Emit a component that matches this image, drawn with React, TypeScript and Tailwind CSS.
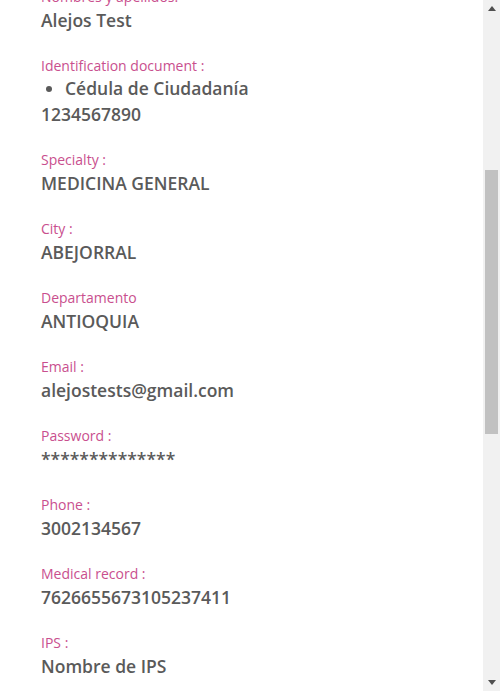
import React from 'react';

const fields: { label: string; value: string; doc?: boolean }[] = [
  { label: 'Nombres y apellidos:', value: 'Alejos Test' },
  { label: 'Identification document :', value: '1234567890', doc: true },
  { label: 'Specialty :', value: 'MEDICINA GENERAL' },
  { label: 'City :', value: 'ABEJORRAL' },
  { label: 'Departamento', value: 'ANTIOQUIA' },
  { label: 'Email :', value: 'alejostests@gmail.com' },
  { label: 'Password :', value: '**************' },
  { label: 'Phone :', value: '3002134567' },
  { label: 'Medical record :', value: '7626655673105237411' },
  { label: 'IPS :', value: 'Nombre de IPS' },
];

function Scrollbar() {
  return (
    <div className="flex h-full w-[17px] flex-col bg-[#f1f1f1]">
      <div className="flex h-[17px] items-center justify-center">
        <svg width="8" height="5" viewBox="0 0 8 5">
          <path d="M0 5 L4 0 L8 5 Z" fill="#505050" />
        </svg>
      </div>
      <div className="h-[153px]" />
      <div className="mx-auto h-[264px] w-[13px] bg-[#c1c1c1]" />
      <div className="flex-1" />
      <div className="flex h-[17px] items-center justify-center">
        <svg width="8" height="5" viewBox="0 0 8 5">
          <path d="M0 0 L8 0 L4 5 Z" fill="#505050" />
        </svg>
      </div>
    </div>
  );
}

export default function App() {
  return (
    <div className="flex h-[691px] w-[500px] overflow-hidden bg-white font-['Open_Sans',sans-serif]">
      <div className="flex-1 overflow-hidden">
        <div className="-mt-[14px] flex flex-col gap-[21px] pl-[41px]">
          {fields.map((f) => (
            <div key={f.label} className="flex flex-col">
              <span className="text-[14px] leading-[21px] text-[#c94f8e]">{f.label}</span>
              {f.doc && (
                <ul className="list-disc pl-6 text-[17.5px] font-semibold leading-[25px] text-[#5a5a5a]">
                  <li>Cédula de Ciudadanía</li>
                </ul>
              )}
              <span className="text-[17.5px] font-semibold leading-[27px] text-[#5a5a5a]">{f.value}</span>
            </div>
          ))}
        </div>
      </div>
      <Scrollbar />
    </div>
  );
}
